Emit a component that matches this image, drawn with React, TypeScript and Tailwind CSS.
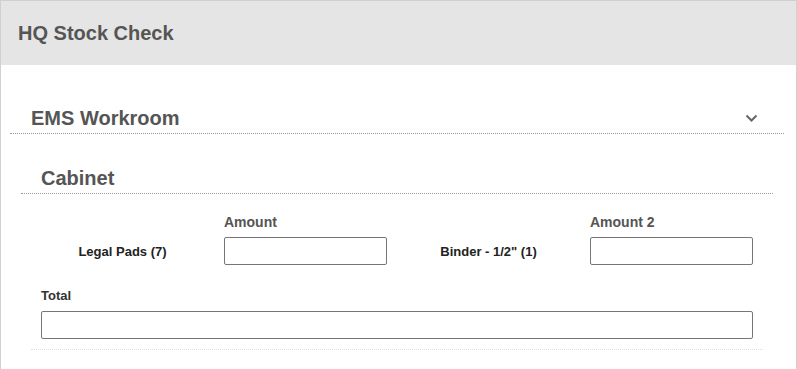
import React from 'react';

const Chevron = () => (
  <svg width="13" height="9" viewBox="0 0 13 9" fill="none">
    <polyline points="1.5,1.5 6.5,6.5 11.5,1.5" stroke="#666" strokeWidth="2" />
  </svg>
);

const Field = ({ label, title }: { label: string; title: string }) => (
  <div className="px-[10px] grid grid-cols-2 gap-x-5">
    <div />
    <div className="text-[14px] leading-4 font-bold text-[#555] mb-[7px]">{title}</div>
    <div className="flex items-center justify-center text-[13px] font-bold text-[#222] pt-[1px]">{label}</div>
    <input className="h-7 w-full border border-[#767676] rounded-[2px] bg-white" />
  </div>
);

export default function App() {
  return (
    <div className="w-[797px] min-h-[369px] border border-b-0 border-[#d0d0d0] bg-white font-['Liberation_Sans',Arial,sans-serif]">
      <div className="h-16 bg-[#e5e5e5] flex items-center px-[17px]">
        <h1 className="text-[20px] leading-6 font-bold text-[#555]">HQ Stock Check</h1>
      </div>
      <div className="pl-[9px] pr-[12px]">
        <div className="mt-[41px] pl-[21px] pr-[26px] pb-[3px] border-b border-dotted border-[#999] flex items-center justify-between">
          <h2 className="text-[20px] leading-6 font-bold text-[#555]">EMS Workroom</h2>
          <Chevron />
        </div>
        <div className="mx-[11px]">
          <div className="mt-8 pl-5 pb-[3px] border-b border-dotted border-[#999]">
            <h3 className="text-[20px] leading-6 font-bold text-[#555]">Cabinet</h3>
          </div>
          <div className="mx-[10px] pt-5 pb-[10px] border-b border-dotted border-[#ddd]">
            <div className="grid grid-cols-2">
              <Field label="Legal Pads (7)" title="Amount" />
              <Field label={'Binder - 1/2" (1)'} title="Amount 2" />
            </div>
            <div className="px-[10px] mt-[23px]">
              <div className="text-[13px] leading-[15px] font-bold text-[#333] mb-[8px]">Total</div>
              <input className="h-7 w-full border border-[#767676] rounded-[2px] bg-white" />
            </div>
          </div>
        </div>
      </div>
    </div>
  );
}
